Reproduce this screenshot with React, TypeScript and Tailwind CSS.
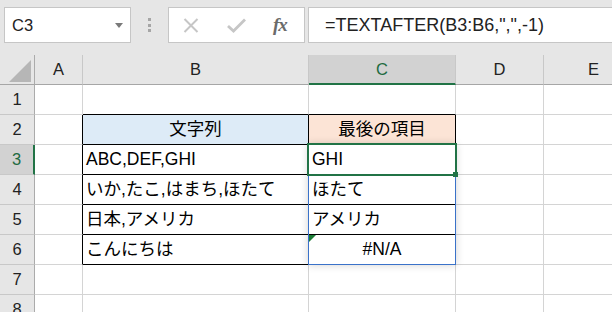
import clsx from 'clsx';

const FONT = "font-['Liberation_Sans','Noto_Sans_CJK_JP',sans-serif]";

const rows = [1, 2, 3, 4, 5, 6, 7, 8];
const cols = ['A', 'B', 'C', 'D', 'E'];

const data: Record<string, string> = {
  B2: '文字列',
  C2: '最後の項目',
  B3: 'ABC,DEF,GHI',
  C3: 'GHI',
  B4: 'いか,たこ,はまち,ほたて',
  C4: 'ほたて',
  B5: '日本,アメリカ',
  C5: 'アメリカ',
  B6: 'こんにちは',
  C6: '#N/A',
};

function bodyCellClass(col: string, row: number) {
  const inTable = row >= 2 && row <= 6;
  let right = 'border-r-[#d4d4d4]';
  let bottom = 'border-b-[#d4d4d4]';
  if (col === 'A' && inTable) right = 'border-r-black';
  if ((col === 'B' || col === 'C') && row === 1) bottom = 'border-b-black';
  if ((col === 'B' || col === 'C') && inTable) {
    right = 'border-r-black';
    bottom = 'border-b-black';
  }
  let bg = 'bg-white';
  if (col === 'B' && row === 2) bg = 'bg-[#ddebf7]';
  if (col === 'C' && row === 2) bg = 'bg-[#fce4d6]';
  const centered = row === 2 || (col === 'C' && row === 6);
  return clsx(
    'h-[30px] border-r border-b flex items-center text-[17.5px] text-black whitespace-nowrap overflow-hidden',
    right,
    bottom,
    bg,
    centered ? 'justify-center' : 'pl-[3px]'
  );
}

function Toolbar() {
  return (
    <div className="h-[55px] bg-[#e6e6e6] flex items-start pt-[7px] pl-[4px]">
      <div className="shrink-0 w-[127px] h-[36px] bg-white border border-[#c6c6c6] flex items-center justify-between pl-[7px] pr-[7px]">
        <span className="text-[16.5px] text-[#222]">C3</span>
        <svg width="8" height="5" viewBox="0 0 8 5">
          <polygon points="0,0 8,0 4,5" fill="#7a7a7a" />
        </svg>
      </div>
      <div className="shrink-0 w-[37px] h-[36px] flex flex-col items-center justify-center gap-[2.5px]">
        <div className="w-[3px] h-[3px] bg-[#a6a6a6]" />
        <div className="w-[3px] h-[3px] bg-[#a6a6a6]" />
        <div className="w-[3px] h-[3px] bg-[#a6a6a6]" />
      </div>
      <div className="shrink-0 w-[137px] h-[36px] bg-white border border-[#c6c6c6] flex items-center pl-[14px]">
        <svg width="16" height="15" viewBox="0 0 16 15">
          <path d="M1.5 1 L14.5 14 M14.5 1 L1.5 14" stroke="#c6c6c6" strokeWidth="2" />
        </svg>
        <svg className="ml-[28px]" width="19" height="15" viewBox="0 0 19 15">
          <path d="M1 8 L6.5 13 L18 1.5" stroke="#c6c6c6" strokeWidth="2.8" fill="none" />
        </svg>
        <span className="ml-[27px] font-['Liberation_Serif',serif] italic font-bold text-[19px] text-[#6b6b6b] tracking-[-1px]">
          fx
        </span>
      </div>
      <div className="shrink-0 ml-[3px] w-[340px] h-[36px] bg-white border border-[#c6c6c6] flex items-center pl-[16px]">
        <span className="text-[18px] text-[#222] whitespace-nowrap">=TEXTAFTER(B3:B6,",",-1)</span>
      </div>
    </div>
  );
}

function Sheet() {
  return (
    <div className="grid grid-cols-[35px_48px_226px_147px_88px_100px]">
      <div className="h-[30px] bg-[#e6e6e6] border-r border-r-[#ababab] border-b border-b-[#a6a6a6] flex items-end justify-end pr-[3px] pb-[2px]">
        <svg width="22" height="22" viewBox="0 0 22 22">
          <polygon points="22,0 22,22 0,22" fill="#b6b6b6" />
        </svg>
      </div>
      {cols.map((c) => (
        <div
          key={c}
          className={clsx(
            'h-[30px] border-r border-r-[#c8c8c8] flex items-center justify-center text-[16.5px]',
            c === 'C'
              ? 'bg-[#d2d2d2] border-b-2 border-b-[#217346] text-[#1e6b41]'
              : 'bg-[#e6e6e6] border-b border-b-[#a6a6a6] text-[#222]'
          )}
        >
          {c}
        </div>
      ))}
      {rows.map((r) => (
        <div key={r} className="contents">
          <div
            className={clsx(
              'h-[30px] border-b border-b-[#c8c8c8] flex items-center justify-center text-[16.5px]',
              r === 3
                ? 'bg-[#d2d2d2] border-r-2 border-r-[#217346] text-[#1e6b41]'
                : 'bg-[#e6e6e6] border-r border-r-[#ababab] text-[#222]'
            )}
          >
            {r}
          </div>
          {cols.map((c) => (
            <div key={c + r} className={bodyCellClass(c, r)}>
              {data[c + r]}
            </div>
          ))}
        </div>
      ))}
    </div>
  );
}

export default function App() {
  return (
    <div className={clsx('relative w-[612px] h-[312px] overflow-hidden bg-white', FONT)}>
      <Toolbar />
      <Sheet />
      {/* spill range outline */}
      <div className="absolute left-[308px] top-[144px] w-[148px] h-[121px] border border-[#3a72c9] shadow-[0_0_8px_rgba(0,0,0,0.18)]" />
      {/* active cell */}
      <div className="absolute left-[307px] top-[143px] w-[150px] h-[33px] border-2 border-[#217346]" />
      <div className="absolute left-[453px] top-[172px] w-[5px] h-[5px] bg-[#217346]" />
      {/* error indicator */}
      <svg className="absolute left-[309px] top-[235px]" width="7" height="7" viewBox="0 0 7 7">
        <polygon points="0,0 7,0 0,7" fill="#1d7d36" />
      </svg>
    </div>
  );
}
